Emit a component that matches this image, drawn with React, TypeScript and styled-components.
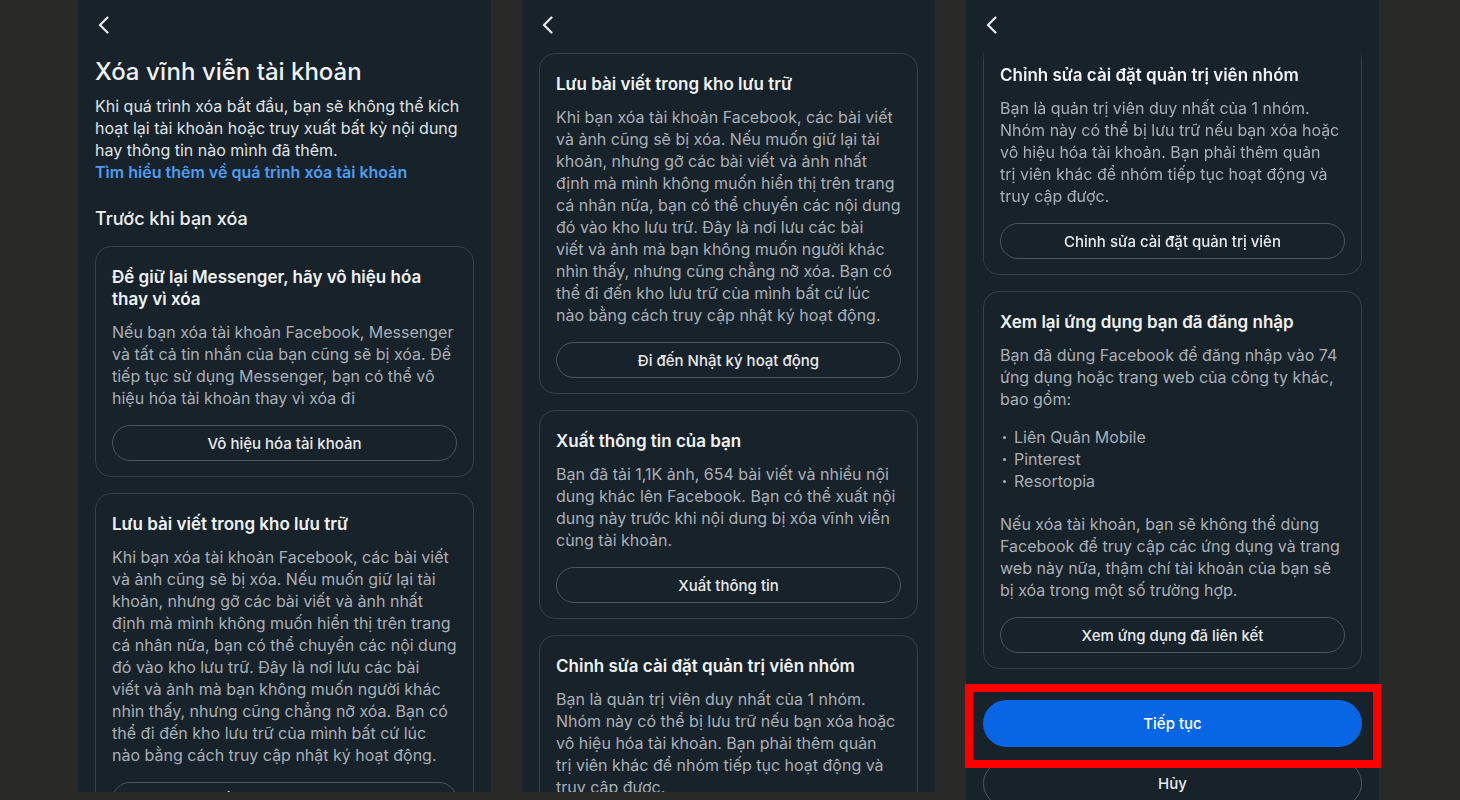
import React from "react"
import styled, { createGlobalStyle } from "styled-components"

// Three phone screens of the "delete account" flow, side by side

const GlobalStyle = createGlobalStyle`
	* { box-sizing: border-box; }
	html, body {
		margin: 0;
		padding: 0;
		height: 800px;
		overflow: hidden;
		background: #292a27;
	}
	body {
		font-family: Inter, "Noto Sans", "Liberation Sans", sans-serif;
		-webkit-font-smoothing: antialiased;
	}
`

const Stage = styled.div`
	display: flex;
	align-items: flex-start;
	gap: 31px;
	padding-left: 78px;
	height: 800px;
`

const Phone = styled.section<{ $height: number }>`
	width: 413px;
	height: ${(p) => p.$height}px;
	flex: none;
	background: #18222a;
	display: flex;
	flex-direction: column;
	overflow-x: visible;
	overflow-y: clip;
`

const Header = styled.header`
	height: 50px;
	flex: none;
	display: flex;
	align-items: center;
	padding-left: 19px;
	color: #e8eaed;
`

const Content = styled.div<{ $top?: number }>`
	display: flex;
	flex-direction: column;
	padding: ${(p) => p.$top ?? 0}px 17px 0;
`

const PageTitle = styled.h1`
	margin: 7px 0 8px;
	font-size: 24px;
	line-height: 30px;
	font-weight: 500;
	color: #f0f2f5;
`

const Intro = styled.p`
	margin: 0;
	font-size: 16px;
	line-height: 22px;
	color: #dfe2e6;
`

const Link = styled.a`
	display: block;
	color: #4c9df2;
	font-weight: 600;
	text-decoration: none;
`

const SectionTitle = styled.h2`
	margin: 24px 0 15px;
	font-size: 18px;
	line-height: 24px;
	font-weight: 500;
	color: #eceef1;
`

const Card = styled.div<{ $clipped?: boolean }>`
	border: 1px solid #33404a;
	border-radius: 16px;
	padding: 19px 16px 15px;
	margin-bottom: 16px;
	${(p) =>
		p.$clipped &&
		`
		border-top: none;
		border-top-left-radius: 0;
		border-top-right-radius: 0;
		padding-top: 14px;
		-webkit-mask-image: linear-gradient(to bottom, transparent 0, #000 12px);
		mask-image: linear-gradient(to bottom, transparent 0, #000 12px);
	`}
`

const CardTitle = styled.h3`
	margin: 0 0 11px;
	font-size: 17px;
	line-height: 22px;
	font-weight: 600;
	color: #f0f2f5;
`

const Body = styled.p`
	margin: 0;
	font-size: 16px;
	line-height: 22px;
	color: #a9afb6;
`

const Line = styled.span`
	display: block;
	white-space: nowrap;
`

const BulletList = styled.ul`
	list-style: none;
	margin: 16px 0 21px;
	padding: 0;
	font-size: 16px;
	line-height: 22px;
	color: #a9afb6;
`

const Bullet = styled.li`
	position: relative;
	padding-left: 14px;

	&::before {
		content: "";
		position: absolute;
		left: 3px;
		top: 10px;
		width: 3px;
		height: 3px;
		border-radius: 50%;
		background: #a9afb6;
	}
`

const OutlineButton = styled.button<{ $tall?: boolean }>`
	width: 100%;
	height: ${(p) => (p.$tall ? 47 : 36)}px;
	margin-top: ${(p) => (p.$tall ? 0 : 16)}px;
	border: 1px solid #4a5661;
	border-radius: 999px;
	background: transparent;
	color: #e8eaed;
	font-family: inherit;
	font-size: 15px;
	font-weight: 500;
	display: flex;
	align-items: center;
	justify-content: center;
`

const Footer = styled.div`
	display: flex;
	flex-direction: column;
	gap: 13px;
	margin-top: 15px;
`

const Highlight = styled.div`
	position: relative;

	&::after {
		content: "";
		position: absolute;
		top: -16px;
		bottom: -21px;
		left: -18px;
		right: -19px;
		border: 8px solid #ff0000;
		pointer-events: none;
		z-index: 2;
	}
`

const PrimaryButton = styled.button`
	width: 100%;
	height: 47px;
	border: none;
	border-radius: 999px;
	background: #0866e4;
	color: #ffffff;
	font-family: inherit;
	font-size: 15px;
	font-weight: 500;
`

type Block = { kind: "text"; lines: string[] } | { kind: "list"; items: string[] }

interface CardData {
	title: string[]
	blocks: Block[]
	action: string
}

const archiveCard: CardData = {
	title: ["Lưu bài viết trong kho lưu trữ"],
	blocks: [
		{
			kind: "text",
			lines: [
				"Khi bạn xóa tài khoản Facebook, các bài viết",
				"và ảnh cũng sẽ bị xóa. Nếu muốn giữ lại tài",
				"khoản, nhưng gỡ các bài viết và ảnh nhất",
				"định mà mình không muốn hiển thị trên trang",
				"cá nhân nữa, bạn có thể chuyển các nội dung",
				"đó vào kho lưu trữ. Đây là nơi lưu các bài",
				"viết và ảnh mà bạn không muốn người khác",
				"nhìn thấy, nhưng cũng chẳng nỡ xóa. Bạn có",
				"thể đi đến kho lưu trữ của mình bất cứ lúc",
				"nào bằng cách truy cập nhật ký hoạt động.",
			],
		},
	],
	action: "Đi đến Nhật ký hoạt động",
}

const adminCard: CardData = {
	title: ["Chỉnh sửa cài đặt quản trị viên nhóm"],
	blocks: [
		{
			kind: "text",
			lines: [
				"Bạn là quản trị viên duy nhất của 1 nhóm.",
				"Nhóm này có thể bị lưu trữ nếu bạn xóa hoặc",
				"vô hiệu hóa tài khoản. Bạn phải thêm quản",
				"trị viên khác để nhóm tiếp tục hoạt động và",
				"truy cập được.",
			],
		},
	],
	action: "Chỉnh sửa cài đặt quản trị viên",
}

const messengerCard: CardData = {
	title: ["Để giữ lại Messenger, hãy vô hiệu hóa", "thay vì xóa"],
	blocks: [
		{
			kind: "text",
			lines: [
				"Nếu bạn xóa tài khoản Facebook, Messenger",
				"và tất cả tin nhắn của bạn cũng sẽ bị xóa. Để",
				"tiếp tục sử dụng Messenger, bạn có thể vô",
				"hiệu hóa tài khoản thay vì xóa đi",
			],
		},
	],
	action: "Vô hiệu hóa tài khoản",
}

const exportCard: CardData = {
	title: ["Xuất thông tin của bạn"],
	blocks: [
		{
			kind: "text",
			lines: [
				"Bạn đã tải 1,1K ảnh, 654 bài viết và nhiều nội",
				"dung khác lên Facebook. Bạn có thể xuất nội",
				"dung này trước khi nội dung bị xóa vĩnh viễn",
				"cùng tài khoản.",
			],
		},
	],
	action: "Xuất thông tin",
}

const appsCard: CardData = {
	title: ["Xem lại ứng dụng bạn đã đăng nhập"],
	blocks: [
		{
			kind: "text",
			lines: [
				"Bạn đã dùng Facebook để đăng nhập vào 74",
				"ứng dụng hoặc trang web của công ty khác,",
				"bao gồm:",
			],
		},
		{ kind: "list", items: ["Liên Quân Mobile", "Pinterest", "Resortopia"] },
		{
			kind: "text",
			lines: [
				"Nếu xóa tài khoản, bạn sẽ không thể dùng",
				"Facebook để truy cập các ứng dụng và trang",
				"web này nữa, thậm chí tài khoản của bạn sẽ",
				"bị xóa trong một số trường hợp.",
			],
		},
	],
	action: "Xem ứng dụng đã liên kết",
}

const BackIcon = () => (
	<svg width="14" height="18" viewBox="0 0 14 18" fill="none">
		<path d="M10.5 1.5 L3 9 L10.5 16.5" stroke="currentColor" strokeWidth="2.2" strokeLinecap="round" strokeLinejoin="round" />
	</svg>
)

const InfoCard = ({ data, clipped }: { data: CardData; clipped?: boolean }) => (
	<Card $clipped={clipped}>
		<CardTitle>
			{data.title.map((t) => (
				<Line key={t}>{t}</Line>
			))}
		</CardTitle>
		{data.blocks.map((b, i) =>
			b.kind === "text" ? (
				<Body key={i}>
					{b.lines.map((l) => (
						<Line key={l}>{l}</Line>
					))}
				</Body>
			) : (
				<BulletList key={i}>
					{b.items.map((item) => (
						<Bullet key={item}>{item}</Bullet>
					))}
				</BulletList>
			),
		)}
		<OutlineButton>{data.action}</OutlineButton>
	</Card>
)

export default function App() {
	return (
		<>
			<GlobalStyle />
			<Stage>
				<Phone $height={792}>
					<Header>
						<BackIcon />
					</Header>
					<Content>
						<PageTitle>Xóa vĩnh viễn tài khoản</PageTitle>
						<Intro>
							<Line>Khi quá trình xóa bắt đầu, bạn sẽ không thể kích</Line>
							<Line>hoạt lại tài khoản hoặc truy xuất bất kỳ nội dung</Line>
							<Line>hay thông tin nào mình đã thêm.</Line>
							<Link href="#">Tìm hiểu thêm về quá trình xóa tài khoản</Link>
						</Intro>
						<SectionTitle>Trước khi bạn xóa</SectionTitle>
						<InfoCard data={messengerCard} />
						<InfoCard data={archiveCard} />
					</Content>
				</Phone>

				<Phone $height={792}>
					<Header>
						<BackIcon />
					</Header>
					<Content $top={3}>
						<InfoCard data={archiveCard} />
						<InfoCard data={exportCard} />
						<InfoCard data={adminCard} />
					</Content>
				</Phone>

				<Phone $height={800}>
					<Header>
						<BackIcon />
					</Header>
					<Content>
						<InfoCard data={adminCard} clipped />
						<InfoCard data={appsCard} />
						<Footer>
							<Highlight>
								<PrimaryButton>Tiếp tục</PrimaryButton>
							</Highlight>
							<OutlineButton $tall>Hủy</OutlineButton>
						</Footer>
					</Content>
				</Phone>
			</Stage>
		</>
	)
}
